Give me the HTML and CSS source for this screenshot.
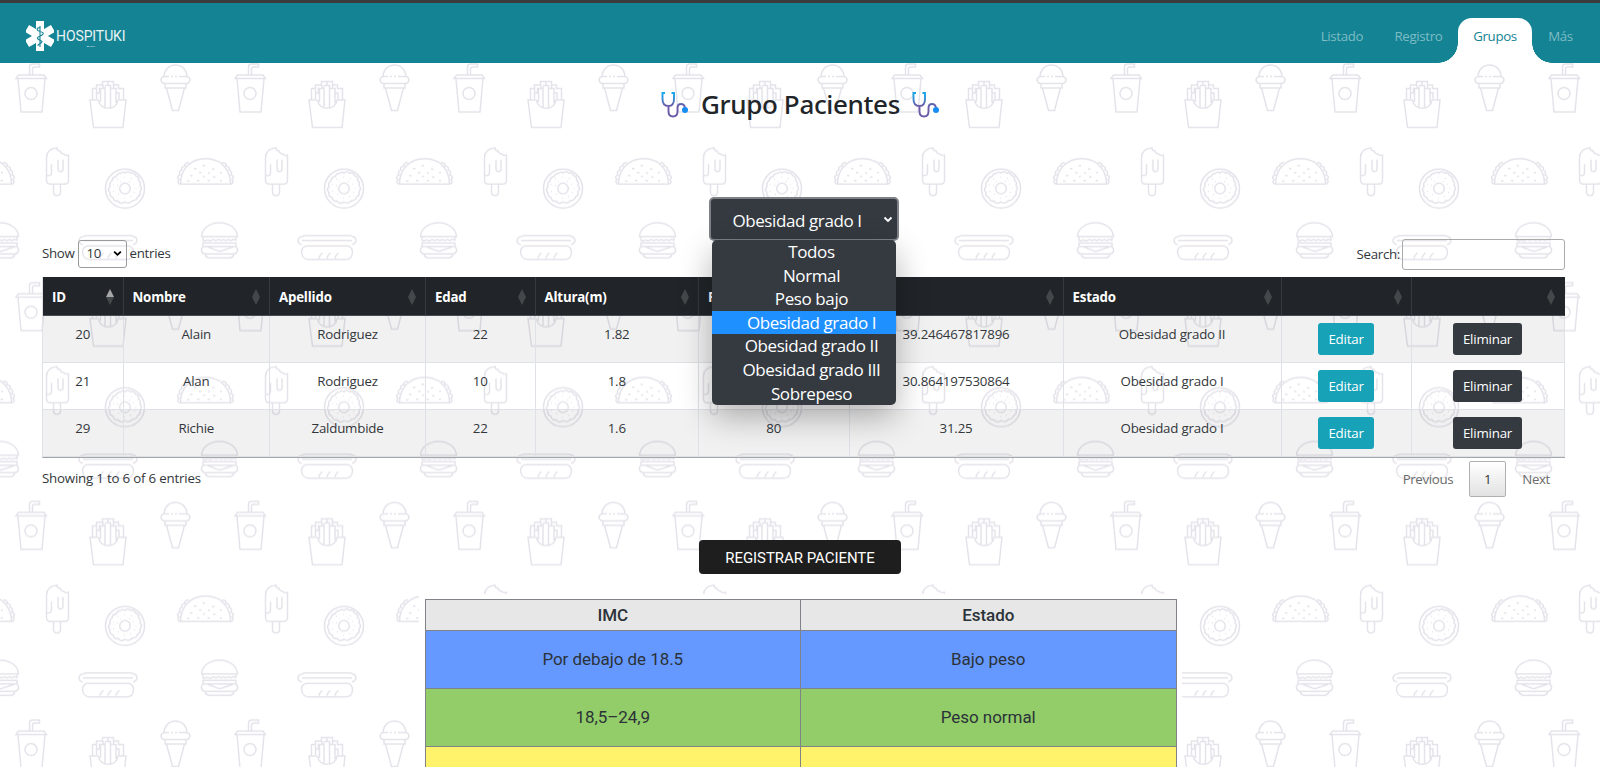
FILE: index.html
```html
<!DOCTYPE html>
<html lang="es">
<head>
<meta charset="utf-8">
<title>Hospituki</title>
<link rel="stylesheet" href="styles.css">
</head>
<body>
<svg class="backdrop" width="1600" height="767" aria-hidden="true">
  <defs>
    <g id="taco">
      <path d="M181 184H230.500C230.500 169 220 158.500 205.500 158.500S180.500 169 180.500 184Z"/>
      <path d="M189 163c-2-1-5 1-4 3c-3 0-4 2-3 4c-3 1-3 3-2 5c-3 1-3 3-1 4.500c-2 2-1 4 1.500 4.500M222 163c2-1 5 1 4 3c3 0 4 2 3 4c3 1 3 3 2 5c3 1 3 3 1 4.500c2 2 1 4-1.500 4.500"/>
      <path d="M194 168.500h2.500M202.500 165.500h2.500M212 169h2.500M199 172.500h2.500M208 172.500l2 1M190 175.500h2.500M203 177l2-1M213 177h2.500M220 172.500h2M187 181h2.500M197 180.500h2.500M207.500 180.500h2.500M219.500 180.500h2.500"/>
    </g>
    <g id="burger">
      <path d="M201.500 236.500C202 229 209 222.700 219.500 222.700S237 229 237.500 236.500Z"/>
      <path d="M203 237v3c0 2 4 0 5 0s2 2 4 0s3 2 5 0s3 2 5 0s3 2 5 0s4 2 5 0s4 1 4 0v-3M203 243h33v3.500h-33zM203 247q-2 1-1.500 4q1 3 4 3h28q3 0 4-3q.5-3-1.500-4M208 247l11.500 4.500L233 247M205 254q1 4 5 4h19q4 0 5-4"/>
    </g>
    <pattern id="snacks" x="0" y="62" width="219" height="218.700" patternUnits="userSpaceOnUse">
      <g class="doodle" transform="translate(0 -62)">
        <path d="M29.500 75v-8q0-3 3-3h7v3h-5q-2 0-2 2v6M18.500 75H44L46.500 78.500H16ZM18 79l3 33h21l3-33"/>
        <circle cx="31" cy="93.500" r="6"/>
        <path d="M98.500 100H90l3.500 27.500H123L126 100h-8c-1 11-18.500 11-19.500 0M92.500 100V88.500h4V85h6v-3.500h11V85h5v3.500h5V100M96.500 99v-6h3v-5.500M96.500 88.500V93M100 88.500h3V85M100.500 88.500v13.500M105 86.500V108M105 88.500h-1.500M105 85.500h5.500V108M113.500 85v3.500h2.500V93h3v6M116 90v13M110.500 88.500h3M108 82v3.500"/>
        <path d="M164 77C164 70 169 65 175.500 65S187 70 187 77M164 76.500h5M171 76.500h2M175 76.500h2M179 76.500h8q3 1 3 3.500q-.5 3-3.500 3.500h-22q-3-.5-3.500-3.500q0-2.500 3-3.500M165 83.500v4.500h21v-4.500M166.500 88l6 22.500h6l6-22.500"/>
        <path d="M46.500 158c0-6 4-9.500 10.500-10q0 3 3 3q1 3 4 3q1 2 4.500 1V180q0 4-4 4H50.500q-4 0-4-4ZM53.500 184v8q0 3.500 3.500 3.500t3.500-3.500v-8M46.500 175q5 2 5-3v-8M58 159.500v9q0 3 2.500 3t2.500-3v-9"/>
        <circle cx="125" cy="188.500" r="19.500"/>
        <circle cx="125" cy="188.500" r="5.300"/>
        <path d="M125 173q3-3 5.500 0q4-1 5 2.500q4 1 3 5q3 2 1.500 5q3 3 0 6q1 4-2.500 5.500q-1 4-5 3.500q-3 4-7.500 1.500q-4 3-7-1q-4 1-5-3.500q-4-1-3-5q-3-3 0-6q-1-4 2-5.500q0-4 4-4.500q2-4 4.500-3q2-2.500 4.500-.500Z"/>
        <path class="crumb" d="M117 178.500l1 1M124 177h1M131 179l1-1M113 184.500h1M117 186l1-1M133 184h1M136 188v1M113 191l1 1M118 194l1 1M124 198h1M130 196l1 1M134 193l1-1M120 181.500h1M129 182l1-1"/>
        <use href="#taco"/><use href="#taco" x="-219"/>
        <use href="#burger"/><use href="#burger" x="-219"/>
        <path d="M83 244.500q-4-.5-4-4q.5-3.500 4.500-4q1-1 4-1h42q3 0 4 1q3.500.5 3.500 4.500q-.5 3-4 3.500M83 240.500h50M87 246h42q4.500 1 4.500 6.500q-.5 7-7 7H90q-6.500 0-7.500-7q0-5.500 4.500-6.500M100 258.500q0-3 3.500-5.500M108 258.500q0-3 3.500-5.500M116 258.500q0-3 3.500-5.500"/>
      </g>
    </pattern>
  </defs>
  <rect width="1600" height="767" fill="url(#snacks)"/>
</svg>

<header class="topbar">
  <a class="brand">
    <svg class="brand-mark" viewBox="0 0 28 30">
      <g fill="#fff"><rect x="10" width="8" height="30"/><rect x="10" width="8" height="30" transform="rotate(60 14 15)"/><rect x="10" width="8" height="30" transform="rotate(-60 14 15)"/></g>
      <path d="M14 5v21M14 7c-3-1-4 2-1 3s6 2 3 4s-6 2-4 4s6 2 3 4s-3 1-3 3" fill="none" stroke="#148394" stroke-width="1.100"/>
    </svg>
    <span class="brand-text">HOSPITUKI<small>BY YUKI</small></span>
  </a>
  <nav class="menu">
    <a class="menu-item">Listado</a>
    <a class="menu-item menu-wide">Registro</a>
    <a class="menu-item menu-active">Grupos</a>
    <a class="menu-item menu-short">Más</a>
  </nav>
</header>

<main>
  <div class="heading">
    <svg class="scope" viewBox="0 0 27 27"><defs><linearGradient id="tube" x1="0" y1="0" x2="0" y2="27" gradientUnits="userSpaceOnUse"><stop offset=".15" stop-color="#1ba4e8"/><stop offset=".55" stop-color="#6a5aa8"/></linearGradient></defs><path d="M4 2H1.500V8C1.500 12.500 4 15 7.500 15S13 12.500 13 8V2H10.500M7.500 15v5.500C7.500 24 9.500 25.500 12 25.500s4.500-1.500 4.500-5V17q0-4 3.500-4t4 4v1" fill="none" stroke="url(#tube)" stroke-width="1.900"/><circle cx="24" cy="19" r="3" fill="#168cf5"/></svg>
    <h1>Grupo Pacientes</h1>
    <svg class="scope" viewBox="0 0 27 27"><path d="M4 2H1.500V8C1.500 12.500 4 15 7.500 15S13 12.500 13 8V2H10.500M7.500 15v5.500C7.500 24 9.500 25.500 12 25.500s4.500-1.500 4.500-5V17q0-4 3.500-4t4 4v1" fill="none" stroke="url(#tube)" stroke-width="1.900"/><circle cx="24" cy="19" r="3" fill="#168cf5"/></svg>
  </div>

  <div class="filter">
    <div class="filter-box">Obesidad grado I
      <svg class="filter-caret" viewBox="0 0 10 7"><path d="M1.500 1.500L5 5l3.500-3.500" fill="none" stroke="#fff" stroke-width="1.800"/></svg>
    </div>
    <ul class="filter-list">
      <li>Todos</li><li>Normal</li><li>Peso bajo</li><li class="picked">Obesidad grado I</li><li>Obesidad grado II</li><li>Obesidad grado III</li><li>Sobrepeso</li>
    </ul>
  </div>

  <section class="patients">
    <div class="controls">
      <div class="length">Show <span class="length-box">10<svg viewBox="0 0 10 7"><path d="M1.300 1.300L5 5l3.700-3.700" fill="none" stroke="#000" stroke-width="2"/></svg></span> entries</div>
      <div class="search">Search:<span class="search-box"></span></div>
    </div>
    <table class="grid">
      <colgroup><col class="c-id"><col class="c-name"><col class="c-last"><col class="c-age"><col class="c-height"><col class="c-weight"><col class="c-imc"><col class="c-state"><col class="c-edit"><col class="c-del"></colgroup>
      <thead><tr><th class="sorted">ID</th><th>Nombre</th><th>Apellido</th><th>Edad</th><th>Altura(m)</th><th>P</th><th></th><th>Estado</th><th></th><th></th></tr></thead>
      <tbody>
        <tr><td>20</td><td>Alain</td><td>Rodriguez</td><td>22</td><td>1.82</td><td></td><td>39.246467817896</td><td>Obesidad grado II</td><td><a class="btn edit">Editar</a></td><td><a class="btn del">Eliminar</a></td></tr>
        <tr><td>21</td><td>Alan</td><td>Rodriguez</td><td>10</td><td>1.8</td><td></td><td>30.864197530864</td><td>Obesidad grado I</td><td><a class="btn edit">Editar</a></td><td><a class="btn del">Eliminar</a></td></tr>
        <tr><td>29</td><td>Richie</td><td>Zaldumbide</td><td>22</td><td>1.6</td><td>80</td><td>31.25</td><td>Obesidad grado I</td><td><a class="btn edit">Editar</a></td><td><a class="btn del">Eliminar</a></td></tr>
      </tbody>
    </table>
    <div class="footer-row">
      <div class="info">Showing 1 to 6 of 6 entries</div>
      <div class="pager"><span>Previous</span><span class="page">1</span><span>Next</span></div>
    </div>
  </section>

  <a class="register">REGISTRAR PACIENTE</a>

  <div class="chart">
    <div class="row head"><div>IMC</div><div>Estado</div></div>
    <div class="row low"><div>Por debajo de 18.5</div><div>Bajo peso</div></div>
    <div class="row normal"><div>18,5–24,9</div><div>Peso normal</div></div>
    <div class="row over"><div></div><div></div></div>
  </div>
</main>
</body>
</html>
```
FILE: styles.css
```css
* { box-sizing: border-box; }
body { margin: 0; height: 767px; overflow: hidden; background: #fff; color: #33373b; font: 13.3px/21px "Open Sans", "Noto Sans", sans-serif; letter-spacing: -.2px; }
.backdrop { position: absolute; left: 0; top: 0; z-index: -1; }
.doodle { fill: none; stroke: #e5e3ea; stroke-width: 1.5; }
.crumb { stroke-width: 1; }

.topbar { height: 63px; border-top: 3px solid #3b3b3d; background: #148394; display: flex; justify-content: space-between; align-items: flex-start; padding: 0 11px 0 26px; }
.brand { display: flex; margin-top: 18px; }
.brand-mark { width: 28px; height: 30px; }
.brand-text { display: flex; flex-direction: column; margin: 5px 0 0 2px; font: 400 14px/20px Roboto, sans-serif; letter-spacing: -.1px; color: #e6f3f5; }
.brand-text small { font-size: 2.5px; line-height: 2px; text-align: center; }
.menu { display: flex; margin-top: 15px; letter-spacing: -.35px; }
.menu-item { width: 74px; height: 45px; line-height: 37px; text-align: center; color: #7dbcc5; }
.menu-wide { width: 79px; }
.menu-short { width: 57px; }
.menu-active { position: relative; background: #fff; color: #148394; border-radius: 14px 14px 0 0; }
.menu-active::before, .menu-active::after { content: ""; position: absolute; bottom: 0; width: 20px; height: 20px; }
.menu-active::before { left: -20px; background: radial-gradient(circle at 0 0, transparent 19.5px, #fff 20px); }
.menu-active::after { right: -20px; background: radial-gradient(circle at 100% 0, transparent 19.5px, #fff 20px); }

.heading { height: 134px; display: flex; justify-content: center; align-items: flex-start; padding-top: 28px; gap: 13px; }
.heading h1 { width: 198px; margin: -5px 0 0; font: 500 26px/36px "Noto Sans", sans-serif; letter-spacing: -.35px; text-align: center; color: #212529; white-space: nowrap; }
.scope { width: 27px; height: 27px; }

.filter { position: relative; width: 190px; height: 42px; margin-left: 709px; font-size: 17px; letter-spacing: -.4px; color: #fff; text-align: center; }
.filter-box { height: 44px; border: 2px solid #7d8185; border-radius: 5px; background: #343a40; line-height: 43px; padding-right: 14px; }
.filter-caret { position: absolute; right: 6px; top: 19px; width: 10px; height: 7px; }
.filter-list { position: absolute; z-index: 2; left: 3px; top: 43px; width: 184px; margin: 0; padding: 0; list-style: none; background: #343a40; border-radius: 5px; box-shadow: 0 12px 32px rgba(0,0,0,.3); overflow: hidden; }
.filter-list li { height: 23.6px; line-height: 24.5px; padding-left: 15px; white-space: nowrap; }
.filter-list .picked { background: #1e90ff; }

.patients { width: 1522px; margin-left: 42px; height: 301px; }
.controls { display: flex; justify-content: space-between; height: 38px; margin-right: -1px; }
.length { display: flex; gap: 3px; height: 29px; align-items: center; letter-spacing: -.3px; }
.length-box { display: flex; align-items: center; justify-content: space-between; width: 49px; height: 28px; border: 1px solid #9a9a9a; border-radius: 3px; padding: 0 4px 0 8px; }
.length-box svg { width: 9px; height: 7px; }
.search { display: flex; height: 31px; align-items: center; gap: 2px; letter-spacing: -.3px; }
.search-box { width: 163px; height: 31px; border: 1px solid #aaa; border-radius: 3px; }

.grid { width: 1522px; table-layout: fixed; border-collapse: separate; border-spacing: 0; border-bottom: 1px solid #a5a6a8; border-left: 1px solid #dee2e6; }
.c-id { width: 80.5px; } .c-name { width: 146.5px; } .c-last { width: 156px; } .c-age { width: 109.5px; } .c-height { width: 163.5px; }
.c-weight { width: 150.5px; } .c-imc { width: 214px; } .c-state { width: 218px; } .c-edit { width: 130px; } .c-del { width: 153px; }
.grid th { position: relative; height: 39px; background: #212529; color: #fff; text-align: left; padding: 2px 9px 0; font-weight: 700; border-right: 1px solid #343a3f; border-bottom: 1px solid #454d55; }
.grid th:last-child { border-right-color: #212529; }
.grid th::before, .grid th::after { content: ""; position: absolute; right: 9px; border: 0 solid transparent; border-width: 0 4.5px; }
.grid th::before { top: 12px; border-bottom: 8px solid #44484b; }
.grid th::after { top: 20px; border-top: 8px solid #44484b; }
.grid .sorted::before { border-bottom-color: #a5a7a9; }
.grid td { height: 47px; vertical-align: top; text-align: center; padding: 8px 0 0; line-height: 21px; border-right: 1px solid #dee2e6; border-bottom: 1px solid #dee2e6; }
.grid tbody tr:nth-child(odd) { background: rgba(0,0,0,.055); }
.btn { display: block; margin: -1px auto 0; height: 32px; line-height: 33px; border-radius: 3px; color: #fff; font-weight: 500; }
.edit { width: 56px; background: #17a2b8; }
.del { width: 69px; background: #343a40; }

.footer-row { display: flex; justify-content: space-between; padding-top: 3px; }
.info { padding-top: 7px; }
.pager { display: flex; align-items: center; gap: 16px; color: #6b6b6b; padding-right: 14px; letter-spacing: -.35px; }
.page { width: 37px; height: 36px; line-height: 35px; text-align: center; color: #333; border: 1px solid #b0b0b0; border-radius: 2px; background: linear-gradient(#fff, #e2e2e2); }

.register { display: block; width: 202px; height: 34px; margin: 0 0 0 699px; border-radius: 4px; background: #1e1e1e; color: #fff; text-align: center; font: 15px/36px Roboto, Arial, sans-serif; letter-spacing: -.05px; }
.chart { width: 762.5px; height: 180px; margin: 20px 0 0 419px; padding: 5px 5px 0 5.5px; background: #fff; font: 17px/57px Roboto, sans-serif; letter-spacing: -.05px; color: #2b3238; text-align: center; }
.row { display: flex; height: 58px; border: 1px solid #808488; border-bottom: 0; }
.row div { flex: 1; }
.row div + div { border-left: 1px solid #808488; }
.head { height: 31px; line-height: 30px; background: #e7e7e7; font-weight: 500; }
.low { background: #6699ff; }
.normal { background: #93cd69; }
.over { background: #fff36b; }
```
